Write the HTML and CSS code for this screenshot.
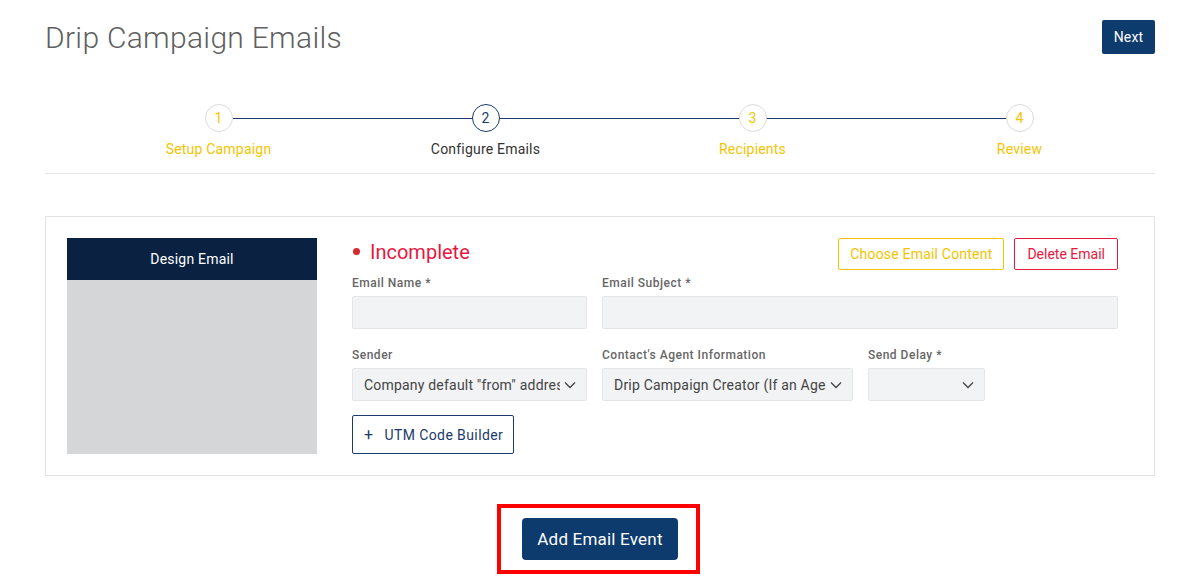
FILE: index.html
```html
<!DOCTYPE html>
<html lang="en">
<head>
  <meta charset="UTF-8" /><meta name="viewport" content="width=device-width, initial-scale=1.0" />
  <title>Drip Campaign Emails</title>
  <link rel="stylesheet" href="styles.css">
</head>
<body>
  <div class="page">
    <div class="header">
      <h1>Drip Campaign Emails</h1>
      <button class="btn-primary btn-next">Next</button>
    </div>

    <div class="stepper">
      <div class="step done">
        <span class="circle">1</span>
        <span class="step-label">Setup Campaign</span>
      </div>
      <div class="step active">
        <span class="circle">2</span>
        <span class="step-label">Configure Emails</span>
      </div>
      <div class="step">
        <span class="circle">3</span>
        <span class="step-label">Recipients</span>
      </div>
      <div class="step">
        <span class="circle">4</span>
        <span class="step-label">Review</span>
      </div>
    </div>

    <div class="card">
      <div class="design">
        <div class="design-head">Design Email</div>
        <div class="design-preview"></div>
      </div>

      <div class="fields">
        <div class="status-row">
          <div class="status"><span class="dot"></span>Incomplete</div>
          <div class="actions">
            <button class="btn-outline yellow">Choose Email Content</button>
            <button class="btn-outline red">Delete Email</button>
          </div>
        </div>

        <div class="row">
          <div class="field w-name">
            <label>Email Name *</label>
            <div class="input"></div>
          </div>
          <div class="field w-subject">
            <label>Email Subject *</label>
            <div class="input"></div>
          </div>
        </div>

        <div class="row">
          <div class="field w-name">
            <label>Sender</label>
            <div class="input select"><span>Company default "from" address</span>
              <svg width="12" height="8" viewBox="0 0 12 8"><path d="M1 1.5l5 5 5-5" fill="none" stroke="#444" stroke-width="1.3"/></svg>
            </div>
          </div>
          <div class="field w-agent">
            <label>Contact's Agent Information</label>
            <div class="input select"><span>Drip Campaign Creator (If an Agent is not assigned)</span>
              <svg width="12" height="8" viewBox="0 0 12 8"><path d="M1 1.5l5 5 5-5" fill="none" stroke="#444" stroke-width="1.3"/></svg>
            </div>
          </div>
          <div class="field w-delay">
            <label>Send Delay *</label>
            <div class="input select"><span></span>
              <svg width="12" height="8" viewBox="0 0 12 8"><path d="M1 1.5l5 5 5-5" fill="none" stroke="#444" stroke-width="1.3"/></svg>
            </div>
          </div>
        </div>

        <button class="btn-utm"><span class="plus">+</span>UTM Code Builder</button>
      </div>
    </div>

    <div class="add-wrap">
      <div class="highlight">
        <button class="btn-primary btn-add">Add Email Event</button>
      </div>
    </div>
  </div>
</body>
</html>
```

FILE: styles.css
```css
body { margin: 0; font-family: Roboto, "Liberation Sans", sans-serif; color: #333; background: #fff; letter-spacing: 0.2px; }
.page { padding: 20px 29px 0 45px; }

.header { display: flex; justify-content: space-between; align-items: flex-start; }
.header h1 { margin: 0; font-size: 30px; line-height: 36px; font-weight: 300; color: #5f5f5f; letter-spacing: 0.3px; }

button { font-family: inherit; letter-spacing: inherit; cursor: pointer; background: none; }
.btn-primary { background: #0d3b6e; color: #fff; border: none; border-radius: 2px; }
.btn-next { width: 53px; height: 34px; font-size: 14px; padding: 0; }

.stepper { display: grid; grid-template-columns: repeat(4, 267px); padding: 48px 0 14px 40px; border-bottom: 1px solid #e6e6e6; }
.step { position: relative; display: flex; flex-direction: column; align-items: center; }
.step:not(:last-child)::after { content: ""; position: absolute; top: 14px; left: 50%; width: 100%; height: 1px; background: #1c3a6b; }
.circle { position: relative; z-index: 1; width: 26px; height: 26px; border: 1px solid #dcdcdc; border-radius: 50%; background: #fff; color: #f5c400; font-size: 14px; line-height: 26px; text-align: center; }
.step-label { margin-top: 7px; font-size: 14px; line-height: 20px; color: #f5c400; }
.step.active .circle { border-color: #1c3a6b; color: #1c3a6b; }
.step.active .step-label { color: #333; }

.card { display: flex; margin-top: 42px; border: 1px solid #e2e2e2; padding: 21px 36px 21px 21px; }
.design { width: 250px; height: 216px; display: flex; flex-direction: column; }
.design-head { height: 42px; background: #0a2142; color: #fff; font-size: 14px; line-height: 42px; text-align: center; }
.design-preview { flex: 1; background: #d5d6d8; }

.fields { flex: 1; margin-left: 35px; }
.status-row { display: flex; justify-content: space-between; height: 32px; }
.status { display: flex; align-items: center; font-size: 20px; color: #e8173e; padding-bottom: 5px; letter-spacing: 0; }
.dot { width: 7px; height: 7px; border-radius: 50%; background: #d62a2a; margin: 0 10px 0 1px; }
.actions { display: flex; gap: 10px; }
.btn-outline { height: 32px; padding: 0 11px; font-size: 14px; border-radius: 2px; background: #fff; }
.btn-outline.yellow { border: 1px solid #f5c400; color: #f5c400; }
.btn-outline.red { border: 1px solid #e8173e; color: #e8173e; padding: 0 12px; letter-spacing: 0; }

.row { display: flex; gap: 15px; margin-top: 5px; }
.row + .row { margin-top: 18px; }
.field label { display: block; font-size: 12px; line-height: 16px; font-weight: 500; color: #666; margin-bottom: 5px; letter-spacing: 0.5px; }
.w-name { width: 235px; }
.w-subject { flex: 1; }
.w-agent { width: 251px; }
.w-delay { width: 117px; }
.input { height: 31px; background: #f2f3f5; border: 1px solid #e4e5e7; border-radius: 2px; }
.select { display: flex; align-items: center; padding: 0 10px 0 11px; font-size: 14px; color: #444; }
.select span { flex: 1; white-space: nowrap; overflow: hidden; }
.select svg { flex: none; margin-left: 4px; }

.btn-utm { margin-top: 14px; height: 39px; width: 162px; border: 1px solid #1c3a6b; border-radius: 2px; color: #1c3a6b; font-size: 14px; padding: 0 0 0 11px; text-align: left; letter-spacing: 0.4px; }
.plus { margin-right: 11px; font-size: 16px; }

.add-wrap { display: flex; justify-content: center; margin-top: 28px; padding-right: 3px; }
.highlight { border: 4px solid #f00; padding: 10px 18px 10px 21px; }
.btn-add { height: 42px; width: 156px; font-size: 17px; border-radius: 4px; padding: 0; }
```
